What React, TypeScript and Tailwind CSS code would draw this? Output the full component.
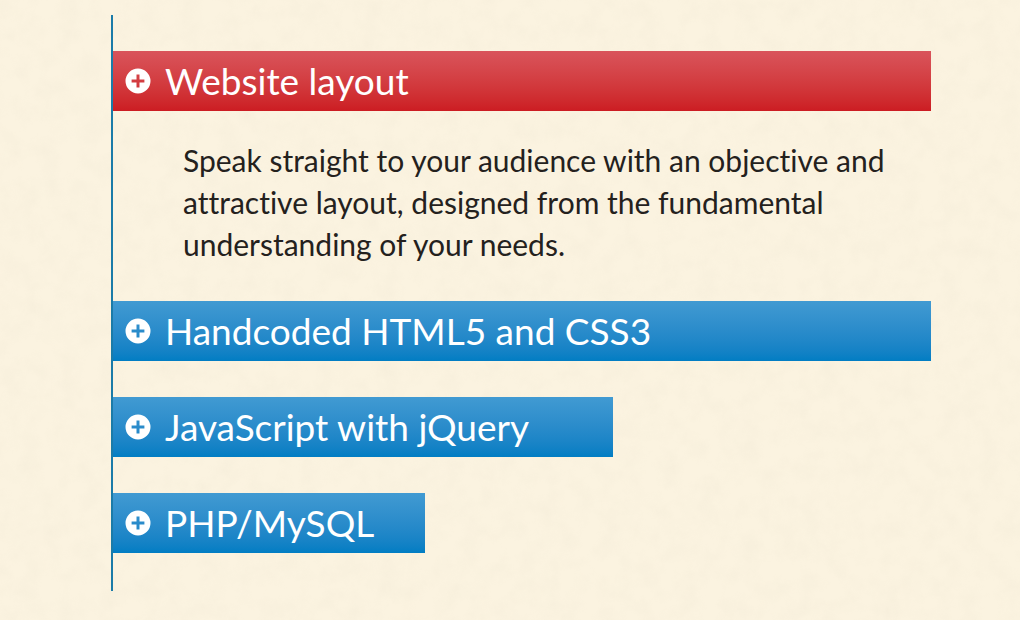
import { useState } from "react";

const skills = [
  {
    title: "Website layout",
    width: 100,
    desc: "Speak straight to your audience with an objective and attractive layout, designed from the fundamental understanding of your needs.",
  },
  { title: "Handcoded HTML5 and CSS3", width: 100 },
  { title: "JavaScript with jQuery", width: 61.1 },
  { title: "PHP/MySQL", width: 38.1 },
];

function PlusBadge() {
  return (
    <svg viewBox="0 0 26 26" className="h-[26px] w-[26px] shrink-0" aria-hidden="true">
      <path
        fill="#fff"
        fillRule="evenodd"
        d="M13 .5a12.5 12.5 0 1 1 0 25a12.5 12.5 0 0 1 0-25ZM11.5 6.6v4.9H6.6v3h4.9v4.9h3v-4.9h4.9v-3h-4.9v-4.9Z"
      />
    </svg>
  );
}

function PaperTexture() {
  return (
    <svg className="pointer-events-none absolute inset-0 h-full w-full" aria-hidden="true">
      <filter id="paper" x="0" y="0" width="100%" height="100%">
        <feTurbulence type="fractalNoise" baseFrequency="0.05" numOctaves="4" seed="4" />
        <feColorMatrix values="0 0 0 0 0.82  0 0 0 0 0.76  0 0 0 0 0.62  0.9 0 0 0 -0.33" />
      </filter>
      <rect width="100%" height="100%" filter="url(#paper)" opacity="0.4" />
    </svg>
  );
}

export default function App() {
  const [active, setActive] = useState(0);

  return (
    <main className="relative min-h-screen bg-[#fbf3e0] py-[15px] pr-[89px] pl-[111px] font-['Lato',sans-serif] [font-variant-ligatures:none]">
      <PaperTexture />

      <div className="relative flex flex-col gap-9 border-l-2 border-[#1b7ba8] pt-9 pb-[38px]">
        {skills.map((skill, i) => (
          <section key={skill.title}>
            <h2 style={{ width: `${skill.width}%` }}>
              <button
                type="button"
                onClick={() => setActive(i)}
                className={`flex h-[60px] w-full items-center gap-[14px] bg-linear-to-b px-3 text-left text-[37px] leading-10 whitespace-nowrap text-white ${
                  i === active ? "from-[#d9545b] to-[#cc1c22]" : "from-[#419ad2] to-[#017dc3]"
                }`}
              >
                <PlusBadge />
                {skill.title}
              </button>
            </h2>

            {i === active && skill.desc && (
              <p className="mt-7 pr-7 pl-[70px] text-3xl leading-[42px] text-[#24211d]">
                {skill.desc}
              </p>
            )}
          </section>
        ))}
      </div>
    </main>
  );
}
